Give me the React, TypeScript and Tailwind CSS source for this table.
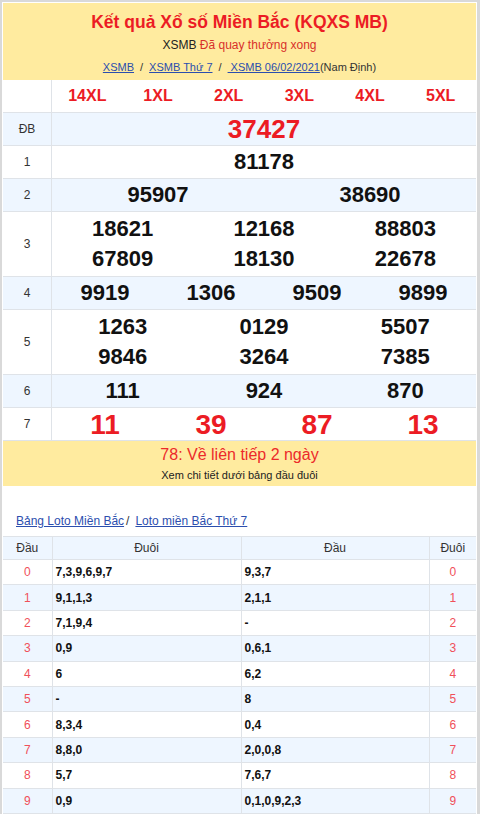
import React from "react";

const red = "text-[#ec1c24]";

type Prize = { label: string; cols: number; nums: string[]; big?: "db" | "g7" };

const prizes: Prize[] = [
  { label: "ĐB", cols: 1, nums: ["37427"], big: "db" },
  { label: "1", cols: 1, nums: ["81178"] },
  { label: "2", cols: 2, nums: ["95907", "38690"] },
  { label: "3", cols: 3, nums: ["18621", "12168", "88803", "67809", "18130", "22678"] },
  { label: "4", cols: 4, nums: ["9919", "1306", "9509", "9899"] },
  { label: "5", cols: 3, nums: ["1263", "0129", "5507", "9846", "3264", "7385"] },
  { label: "6", cols: 3, nums: ["111", "924", "870"] },
  { label: "7", cols: 4, nums: ["11", "39", "87", "13"], big: "g7" },
];

const gridCols: Record<number, string> = {
  1: "grid-cols-1",
  2: "grid-cols-2",
  3: "grid-cols-3",
  4: "grid-cols-4",
};

const loto = [
  ["7,3,9,6,9,7", "9,3,7"],
  ["9,1,1,3", "2,1,1"],
  ["7,1,9,4", "-"],
  ["0,9", "0,6,1"],
  ["6", "6,2"],
  ["-", "8"],
  ["8,3,4", "0,4"],
  ["8,8,0", "2,0,0,8"],
  ["5,7", "7,6,7"],
  ["0,9", "0,1,0,9,2,3"],
];

const App = () => {
  return (
    <div className="w-[480px] h-[814px] overflow-hidden bg-white font-['Liberation_Sans',Arial,sans-serif] text-[#222]">
      <div className="border-2 border-r-[3px] border-b-0 border-[#d9d9d9] p-px pb-0 bg-white">
        {/* Header */}
        <div className="bg-[#ffeb9f] h-[77px] flex flex-col items-center">
          <h1 className={`mt-[8px] text-[17.5px] leading-[22px] font-bold ${red}`}>Kết quả Xổ số Miền Bắc (KQXS MB)</h1>
          <p className="mt-[4px] text-[12px] leading-[16px] text-[#222]">
            XSMB <span className="text-[#d8302a]">Đã quay thưởng xong</span>
          </p>
          <p className="mt-[7px] text-[11px] leading-[15px] text-[#333]">
            <span className="underline text-[#2b4eae]">XSMB</span>
            <span className="mx-[6px]">/</span>
            <span className="underline text-[#2b4eae]">XSMB Thứ 7</span>
            <span className="mx-[6px]">/</span>
            <span className="underline text-[#2b4eae]">&nbsp;XSMB 06/02/2021</span>
            (Nam Định)
          </p>
        </div>

        {/* Prize table */}
        <div className="border-b border-[#dfe3e8]">
          <div className="flex h-[33px] border-b border-[#dfe3e8]">
            <div className="w-[49px] shrink-0 border-r border-[#dfe3e8]" />
            <div className="flex-1 grid grid-cols-6 items-center">
              {["14XL", "1XL", "2XL", "3XL", "4XL", "5XL"].map((x) => (
                <span key={x} className={`text-center text-[16px] font-bold ${red}`}>{x}</span>
              ))}
            </div>
          </div>
          {prizes.map((p, i) => {
            const rows = p.nums.length / p.cols;
            return (
              <div
                key={p.label}
                className={`flex border-b border-[#dfe3e8] last:border-b-0 ${i % 2 === 0 ? "bg-[#eef6ff]" : "bg-white"}`}
              >
                <div className="w-[49px] shrink-0 border-r border-[#dfe3e8] flex items-center justify-center text-[12px] text-[#333]">
                  {p.label}
                </div>
                <div className={`flex-1 grid ${gridCols[p.cols]} ${rows > 1 ? "py-[2px]" : ""}`}>
                  {p.nums.map((n, j) => (
                    <span
                      key={j}
                      className={
                        p.big === "db"
                          ? `text-center h-[32px] leading-[32px] text-[26px] font-bold ${red}`
                          : p.big === "g7"
                          ? `text-center h-[32px] leading-[34px] text-[28px] font-bold ${red}`
                          : `text-center ${rows > 1 ? "h-[30px] leading-[30px]" : "h-[32px] leading-[32px]"} text-[22px] font-bold text-[#111]`
                      }
                    >
                      {n}
                    </span>
                  ))}
                </div>
              </div>
            );
          })}
        </div>

        {/* Banner */}
        <div className="bg-[#ffeb9f] h-[45px] flex flex-col items-center">
          <p className="mt-[3px] text-[16px] leading-[21px] text-[#ec2a2a]">78: Về liên tiếp 2 ngày</p>
          <p className="mt-[3px] text-[11px] leading-[14px] text-[#222]">Xem chi tiết dưới bảng đầu đuôi</p>
        </div>

        {/* Loto links */}
        <div className="h-[50px] flex items-end pb-[7px] pl-[13px] text-[12px] leading-[16px] text-[#333]">
          <span className="underline text-[#2b4eae]">Bảng Loto Miền Bắc</span>
          <span className="ml-[2px] mr-[6px]">/</span>
          <span className="underline text-[#2b4eae]">Loto miền Bắc Thứ 7</span>
        </div>

        {/* Loto table */}
        <table className="w-full border-collapse table-fixed text-[12px]">
          <colgroup>
            <col className="w-[49px]" />
            <col className="w-[189px]" />
            <col className="w-[188px]" />
            <col />
          </colgroup>
          <thead>
            <tr className="bg-[#eef6ff] h-[23px]">
              <th className="border border-l-0 border-[#dfe3e8] font-normal text-[#333]">Đầu</th>
              <th className="border border-[#dfe3e8] font-normal text-[#333]">Đuôi</th>
              <th className="border border-[#dfe3e8] font-normal text-[#333]">Đầu</th>
              <th className="border border-r-0 border-[#dfe3e8] font-normal text-[#333]">Đuôi</th>
            </tr>
          </thead>
          <tbody>
            {loto.map(([a, b], i) => (
              <tr key={i} className={`h-[25.4px] ${i % 2 === 1 ? "bg-[#eef6ff]" : "bg-white"}`}>
                <td className="border border-l-0 border-[#dfe3e8] text-center text-[#f0505a]">{i}</td>
                <td className="border border-[#dfe3e8] pl-[3px] font-bold text-[#111]">{a}</td>
                <td className="border border-[#dfe3e8] pl-[3px] font-bold text-[#111]">{b}</td>
                <td className="border border-r-0 border-[#dfe3e8] text-center text-[#f0505a]">{i}</td>
              </tr>
            ))}
          </tbody>
        </table>
      </div>
    </div>
  );
};

export default App;
